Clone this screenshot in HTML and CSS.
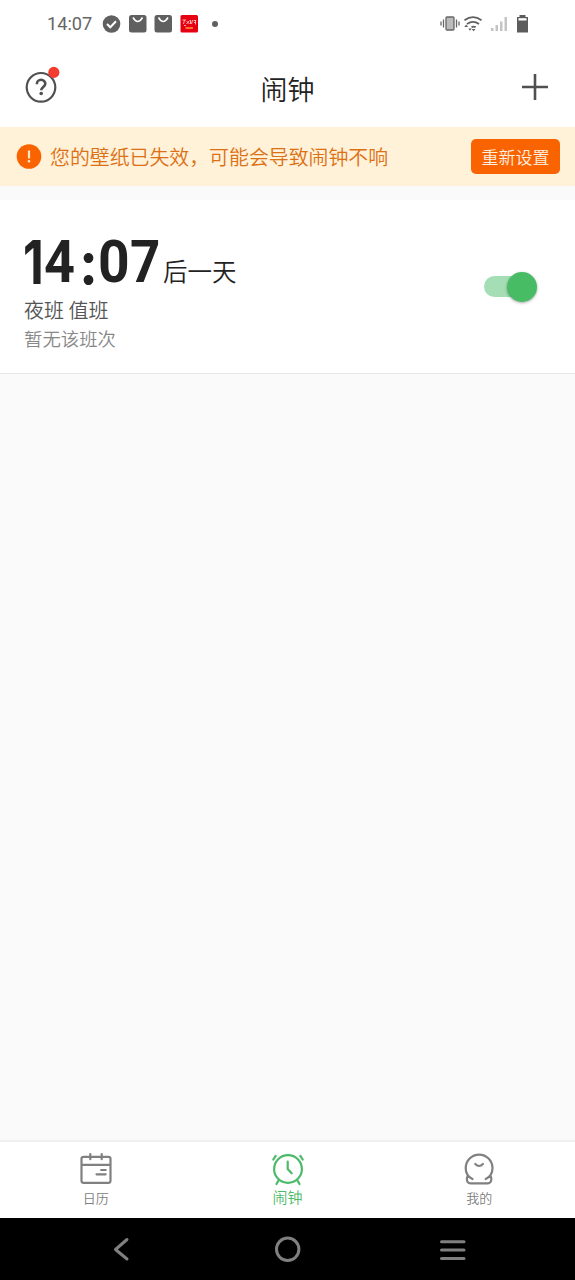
FILE: index.html
```html
<!DOCTYPE html>
<html lang="zh-CN">
<head>
<meta charset="utf-8">
<title>闹钟</title>
<link rel="stylesheet" href="styles.css">
</head>
<body>
<div class="screen">
  <div class="status">
    <span class="status-time">14:07</span>
    <svg class="status-left" width="112" height="20" viewBox="0 0 112 20">
      <circle cx="9.500" cy="10" r="8.800" fill="#606060"/>
      <path d="M5 10l3.300 3.300 5.700-6" fill="none" stroke="#fff" stroke-width="2"/>
      <g fill="#606060"><rect x="27" y="1" width="17.500" height="17.500" rx="2.500"/><rect x="52.500" y="1" width="17.500" height="17.500" rx="2.500"/></g>
      <path d="M31 3.500q4.700 8 9.500 0M56.500 3.500q4.700 8 9.500 0" fill="none" stroke="#fff" stroke-width="1.500"/>
      <rect x="78.500" y="1" width="17.500" height="17.500" rx="1.500" fill="#e60012"/>
      <path d="M80.500 6h3.500M82.500 6l-1 4M84.500 7l3 3M87.500 6.500l-3 3.500M88.500 6v4M90.500 6l-1 4M91.500 6.500h2.500M92 8.500h2M93.500 6v4.500M82 11.500h2" stroke="#ffd9d3" fill="none" stroke-width=".8"/>
      <path d="M83.500 14h7.500" stroke="#ffc04a" stroke-width="1.200"/>
    </svg>
    <span class="status-dot"></span>
    <svg class="status-right" width="92" height="22" viewBox="0 0 92 22">
      <g fill="none" stroke="#666" stroke-width="1.300">
        <rect x="6" y="4" width="8" height="13" rx="1" fill="#bbb"/>
        <path d="M3.500 6.500v8M1 8.500v4M16.500 6.500v8M19 8.500v4"/>
      </g>
      <g fill="none" stroke="#606060" stroke-width="1.900">
        <path d="M24.500 7.200q8.500-6.200 17 0M27 11q6-4.200 12 0M31.500 14.300q2-1.300 4.200 0"/>
      </g>
      <path d="M33.600 18.200l-1.900-2.200h3.800zM24.300 14l1.900-2.500 1.900 2.500zM28.300 15.500l1.700 2.200 1.700-2.200z" fill="#606060"/>
      <g fill="#c4c4c4"><rect x="51" y="15" width="2.500" height="3"/><rect x="55.500" y="12" width="2.500" height="6"/><rect x="60" y="8.500" width="2.500" height="9.500"/><rect x="64.500" y="4" width="2.500" height="14"/></g>
      <path d="M79.500 2h6v2h2.500v15.500h-11V4h2.500z" fill="#5c5c5c"/>
      <rect x="78.500" y="5.200" width="8" height="2.300" fill="#fff"/>
    </svg>
  </div>

  <header class="header">
    <svg class="help" width="40" height="40" viewBox="0 0 40 40">
      <circle cx="20" cy="21.300" r="14.300" fill="none" stroke="#505050" stroke-width="2.200"/>
      <path d="M15.900 18.300v-.500a4.200 4 0 0 1 8.400 0c0 3-4.100 3.300-4.100 6.400" fill="none" stroke="#505050" stroke-width="2.600"/>
      <circle cx="20.200" cy="27.500" r="1.800" fill="#505050"/>
      <circle cx="32.800" cy="6.400" r="5.600" fill="#f33b30"/>
    </svg>
    <h1 class="title">闹钟</h1>
    <svg class="add" width="28" height="28" viewBox="0 0 28 28"><path d="M14 1v26M1 14h26" stroke="#505050" stroke-width="2.600"/></svg>
  </header>

  <div class="notice">
    <svg class="notice-icon" width="26" height="26" viewBox="0 0 26 26">
      <circle cx="13" cy="12.500" r="12.300" fill="#fa6400"/>
      <path d="M13 6.500v8" stroke="#ffe8c8" stroke-width="2.200"/><circle cx="13" cy="17.300" r="1.300" fill="#ffe8c8"/>
    </svg>
    <span class="notice-text">您的壁纸已失效，可能会导致闹钟不响</span>
    <button class="notice-button">重新设置</button>
  </div>

  <main class="alarms">
    <section class="alarm">
      <div class="alarm-info">
        <div class="alarm-when">
          <span class="alarm-time"><span class="one">1</span><span class="four">4</span><span class="colon">:</span><span class="zero">0</span><span class="seven">7</span></span>
          <span class="alarm-day">后一天</span>
        </div>
        <div class="alarm-name">夜班 值班</div>
        <div class="alarm-shift">暂无该班次</div>
      </div>
      <div class="switch"><span class="knob"></span></div>
    </section>
  </main>

  <nav class="tabs">
    <a class="tab">
      <svg width="34" height="34" viewBox="0 0 34 34" fill="none" stroke="#808080" stroke-width="2.200" stroke-linecap="round">
        <rect x="2.500" y="4.800" width="29" height="26" rx="2"/><path d="M3 12.800h28M11.300 2.200v5M22.700 2.200v5M22.200 18h4.500M17.500 22.300h9.200"/>
      </svg>
      <span class="tab-label">日历</span>
    </a>
    <a class="tab tab-active">
      <svg width="34" height="34" viewBox="0 0 34 34" fill="none" stroke="#4cba69" stroke-width="2.200" stroke-linecap="round">
        <circle cx="17" cy="17" r="13.900"/><path d="M16.700 9.500v7.500l4 4.300M7.500 28.500l-2 3.500M26.500 28.500l2 3.500M2.300 7.500l2.400-3.700M31.700 7.500l-2.400-3.700"/>
      </svg>
      <span class="tab-label">闹钟</span>
    </a>
    <a class="tab">
      <svg width="34" height="34" viewBox="0 0 34 34" fill="none" stroke="#808080" stroke-width="2.200" stroke-linecap="round" stroke-linejoin="round">
        <path d="M10.500 27C6 25 3.700 20.500 3.700 16a13.400 13.400 0 0 1 26.800 0c0 4.500-2.300 9-6.800 11M5.800 23.500c-2 3.500-1 7.900 3 7.900h16.600c4 0 5-4.400 3-7.900M13.300 12q3.800 4 7.600 0"/>
      </svg>
      <span class="tab-label">我的</span>
    </a>
  </nav>

  <div class="system">
    <svg width="575" height="62" viewBox="0 0 575 62" fill="none" stroke="#808080" stroke-width="3" stroke-linecap="round" stroke-linejoin="round">
      <path d="M127 21.500l-11.500 10 11.500 9.500"/><circle cx="287.700" cy="31.300" r="11.200"/><path d="M441.500 23.700h22.500M441.500 32h22.500M441.500 40.400h22.500"/>
    </svg>
  </div>
</div>
</body>
</html>
```
FILE: styles.css
```css
* { box-sizing: border-box; }
body { margin: 0; font-family: "Noto Sans CJK SC", sans-serif; font-weight: 350; background: #fafafa; }
.screen { width: 575px; height: 1280px; display: flex; flex-direction: column; overflow: hidden; background: #fafafa; }
.status { height: 48px; display: flex; align-items: center; padding: 0 43px 0 47px; background: #fff; flex: none; }
.status-time { width: 55px; font: 18.2px/24px Roboto, sans-serif; color: #666; }
.status-left { width: 112px; flex: none; }
.status-dot { width: 6px; height: 6px; margin-left: -2px; border-radius: 50%; background: #606060; }
.status-right { margin-left: auto; }
.header { height: 79px; flex: none; display: grid; grid-template-columns: 40px 1fr 28px; padding: 0 26px 0 21px; background: #fff; }
.help { margin-top: 18px; }
.title { margin: 21px 0 0; padding-right: 7px; text-align: center; font-size: 27px; line-height: 40px; font-weight: 350; color: #222; }
.add { margin-top: 25px; }
.notice { height: 59px; flex: none; display: flex; align-items: center; padding: 0 15px 0 16px; background: #fff2d9; }
.notice-icon { flex: none; }
.notice-text { margin: 1px 0 0 8px; font-size: 19.9px; line-height: 30px; color: #dc7014; white-space: nowrap; }
.notice-button { width: 89px; height: 35px; margin-left: auto; padding: 0; border: 0; border-radius: 5px; background: #fa6400; color: #fff0e0; font: 350 17px/34px "Noto Sans CJK SC", sans-serif; }
.alarms { flex: 1; padding-top: 14px; }
.alarm { height: 174px; display: flex; justify-content: space-between; padding: 34px 38px 0 24px; background: #fff; border-bottom: 1px solid #e6e6e6; }
.alarm-when { height: 61px; display: flex; align-items: flex-start; }
.alarm-time { width: 139px; display: flex; font: 700 60px/56px Roboto, sans-serif; color: #222; }
.alarm-time span { transform-origin: 0 50%; white-space: nowrap; }
.alarm-time .one, .alarm-time .colon { font-family: Inter, sans-serif; }
.one { width: 20px; transform: translateX(-1px) scaleX(.8); }
.four { width: 36px; transform: scaleX(.9); }
.colon { width: 18px; transform: translateX(-1px) scaleX(.95); }
.zero { width: 32px; transform: scaleX(.92); }
.seven { width: 30px; transform: scaleX(.88); }
.alarm-day { font-size: 24.5px; line-height: 36px; margin-top: 19px; color: #222; }
.alarm-name { font-size: 20px; line-height: 30px; color: #555; }
.alarm-shift { font-size: 18.4px; line-height: 27px; color: #888; }
.switch { width: 53px; height: 21px; margin-top: 42px; border-radius: 11px; background: linear-gradient(to right, #a5deb4 75%, transparent 75%); display: flex; align-items: center; justify-content: flex-end; }
.knob { width: 30px; height: 30px; border-radius: 50%; background: #48bb65; box-shadow: 0 1px 3px rgba(0,0,0,.35); }
.tabs { height: 78px; flex: none; display: flex; background: #fff; border-top: 2px solid #f0f0f0; }
.tab { flex: 1; display: flex; flex-direction: column; align-items: center; padding-top: 10px; color: #808080; }
.tab-label { font-size: 13px; line-height: 20px; margin-top: 2px; }
.tab-active { color: #4cba69; }
.tab-active .tab-label { font-size: 15px; margin-top: 1px; }
.system { height: 62px; flex: none; background: #000; }
.system svg { display: block; }
```
